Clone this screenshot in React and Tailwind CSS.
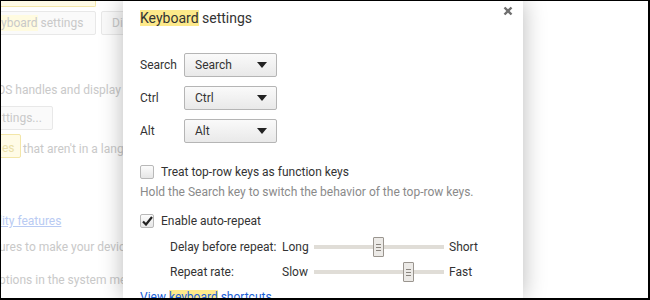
import React from "react";

function Select({ value }) {
  return (
    <div className="flex h-[24px] w-[93px] items-center justify-between rounded-[2px] border border-[#b5b5b5] bg-gradient-to-b from-[#fafafa] to-[#e9e9e9] pl-[10px] pr-[9px] text-[12px] text-[#333]">
      <span>{value}</span>
      <svg width="10" height="6" viewBox="0 0 10 6">
        <path d="M0 0 L10 0 L5 6 Z" fill="#222" />
      </svg>
    </div>
  );
}

function Slider({ pos }) {
  return (
    <div className="relative h-[20px] w-[130px]">
      <div className="absolute left-0 right-0 top-[8px] h-[4px] bg-[#e0ddd7]" />
      <div
        className="absolute top-0 flex h-[20px] w-[11px] flex-col items-center justify-center gap-[2px] rounded-[1px] border border-[#9a958f] bg-[#eceae7]"
        style={{ left: pos }}
      >
        <div className="h-px w-[5px] bg-[#8a857f]" />
        <div className="h-px w-[5px] bg-[#8a857f]" />
        <div className="h-px w-[5px] bg-[#8a857f]" />
      </div>
    </div>
  );
}

function Checkbox({ checked }) {
  return (
    <div className="flex h-[14px] w-[14px] items-center justify-center rounded-[2px] border border-[#b8b8b8] bg-gradient-to-b from-[#fcfcfc] to-[#e6e6e6]">
      {checked && (
        <svg width="11" height="10" viewBox="0 0 11 10">
          <path d="M1 5.5 L4 8.5 L10 1" stroke="#222" strokeWidth="2.2" fill="none" />
        </svg>
      )}
    </div>
  );
}

export default function App() {
  return (
    <div
      className="relative h-[300px] w-[650px] overflow-hidden border-t border-l border-r-2 border-b-2 border-black bg-white"
      style={{ fontFamily: "Roboto, 'Liberation Sans', sans-serif" }}
    >
      {/* faded settings page behind */}
      <div className="flex flex-col text-[12px] leading-[16px] text-[#c9c9c9]">
        <div className="ml-[-2px] h-[6px] w-[97px] rounded-b-[2px] border border-t-0 border-[#f3e6a8] bg-[#fffbe6]" />
        <div className="mt-[4px] flex gap-[5px]">
          <div className="ml-[-30px] flex h-[24px] w-[125px] items-center rounded-[2px] border border-[#e8e8e8] bg-[#fafafa] pl-[29px]">
            <span className="bg-[#fffbe0]">yboard</span>
            <span>&nbsp;settings</span>
          </div>
          <div className="flex h-[24px] w-[40px] items-center rounded-[2px] border border-[#e8e8e8] bg-[#fafafa] pl-[10px]">
            Di
          </div>
        </div>
        <div className="ml-[-4px] mt-[47px]">OS handles and display</div>
        <div className="ml-[-10px] mt-[8px] flex h-[24px] w-[62px] items-center rounded-[2px] border border-[#e8e8e8] bg-[#fafafa] pl-[10px]">
          ttings...
        </div>
        <div className="mt-[4px] flex items-end">
          <div className="ml-[-10px] flex h-[24px] w-[30px] items-end rounded-[2px] border border-[#f3e6a8] bg-[#fffbe6] pb-[1px] pl-[10px] text-[#eadfa8]">
            es
          </div>
          <span className="mb-[1px] ml-[2px]">that aren't in a language</span>
        </div>
        <div className="ml-[-2px] mt-[55px] text-[#b9cbf3] underline">lity features</div>
        <div className="ml-[-2px] mt-[10px]">ures to make your device</div>
        <div className="ml-[-2px] mt-[17px]">ptions in the system menu</div>
      </div>

      {/* dialog overlay */}
      <div className="absolute left-[122px] top-0 h-full w-[400px] bg-white pl-[17px] text-[12px] leading-[16px] shadow-[0_0_22px_rgba(0,0,0,0.28)]">
        <div className="absolute right-[10px] top-[5px]">
          <svg width="10" height="10" viewBox="0 0 10 10">
            <path d="M1.5 1.5 L8.5 8.5 M8.5 1.5 L1.5 8.5" stroke="#6f6f6f" strokeWidth="2.4" />
          </svg>
        </div>
        <div className="mt-[7px] text-[14px] leading-[20px] text-[#333]">
          <span className="bg-[#fde98a]">Keyboard</span> settings
        </div>

        <div className="mt-[25px] grid grid-cols-[44px_auto] items-center gap-y-[9px] text-[#333]">
          <span>Search</span>
          <Select value="Search" />
          <span>Ctrl</span>
          <Select value="Ctrl" />
          <span>Alt</span>
          <Select value="Alt" />
        </div>

        <div className="mt-[21px] flex items-center gap-[7px] text-[#333]">
          <Checkbox />
          <span>Treat top-row keys as function keys</span>
        </div>
        <div className="mt-[4px] text-[#8a8a8a]">
          Hold the Search key to switch the behavior of the top-row keys.
        </div>

        <div className="mt-[13px] flex items-center gap-[7px] text-[#333]">
          <Checkbox checked />
          <span>Enable auto-repeat</span>
        </div>

        <div className="ml-[30px] mt-[8px] grid grid-cols-[112px_32px_130px_auto] items-center gap-y-[5px] text-[#333]">
          <span className="whitespace-nowrap">Delay before repeat:</span>
          <span>Long</span>
          <Slider pos={59} />
          <span className="ml-[5px]">Short</span>
          <span>Repeat rate:</span>
          <span>Slow</span>
          <Slider pos={89} />
          <span className="ml-[5px]">Fast</span>
        </div>

        <div className="mt-[7px] text-[#1a5fd6] underline">
          View <span className="bg-[#fde98a]">keyboard</span> shortcuts
        </div>
      </div>
    </div>
  );
}
